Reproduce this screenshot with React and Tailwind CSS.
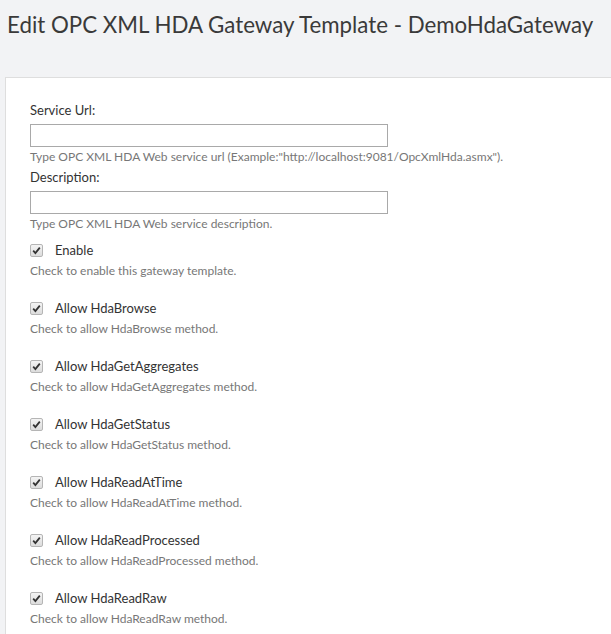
import React from 'react';

const font = { fontFamily: '"Segoe UI", Lato, "Open Sans", sans-serif' };

const toggles = [
  ['Enable', 'Check to enable this gateway template.'],
  ['Allow HdaBrowse', 'Check to allow HdaBrowse method.'],
  ['Allow HdaGetAggregates', 'Check to allow HdaGetAggregates method.'],
  ['Allow HdaGetStatus', 'Check to allow HdaGetStatus method.'],
  ['Allow HdaReadAtTime', 'Check to allow HdaReadAtTime method.'],
  ['Allow HdaReadProcessed', 'Check to allow HdaReadProcessed method.'],
  ['Allow HdaReadRaw', 'Check to allow HdaReadRaw method.'],
];

function Check() {
  return (
    <span className="w-[13px] h-[13px] shrink-0 rounded-[2px] border border-[#b5b5b5] bg-gradient-to-b from-[#f4f4f4] to-[#dcdcdc] flex items-center justify-center">
      <svg width="9" height="9" viewBox="0 0 9 9">
        <path d="M1.2 4.6 L3.4 7 L7.8 1.6" fill="none" stroke="#333" strokeWidth="1.8" />
      </svg>
    </span>
  );
}

export default function App() {
  return (
    <div className="min-h-[634px] bg-[#f2f3f5] text-[#333] overflow-hidden" style={font}>
      <h1 className="pt-[10px] pl-[7px] text-[22.3px] leading-[29px] font-normal text-[#3a3a3a] whitespace-nowrap">
        Edit OPC XML HDA Gateway Template - DemoHdaGateway
      </h1>
      <div className="mt-[38px] ml-[5px] bg-white border border-[#dedede] border-r-0 pt-[23px] pl-[24px] pb-8">
        <div className="text-[13px] leading-[18px]">Service Url:</div>
        <div className="mt-[5px] w-[358px] h-[23px] border border-[#a9a9a9] bg-white" />
        <div className="mt-[1px] text-[12px] leading-[17px] text-[#777]">
          Type OPC XML HDA Web service url (Example:"http://localhost:9081/OpcXmlHda.asmx").
        </div>
        <div className="mt-[3px] text-[13px] leading-[18px]">Description:</div>
        <div className="mt-[5px] w-[358px] h-[23px] border border-[#a9a9a9] bg-white" />
        <div className="mt-[1px] text-[12px] leading-[17px] text-[#777]">
          Type OPC XML HDA Web service description.
        </div>
        <div className="mt-[9px] flex flex-col gap-[20px]">
          {toggles.map(([label, help]) => (
            <div key={label}>
              <div className="flex items-center h-[18px] gap-[12px]">
                <Check />
                <span className="text-[13px] leading-[18px]">{label}</span>
              </div>
              <div className="mt-[3px] text-[12px] leading-[17px] text-[#777]">{help}</div>
            </div>
          ))}
        </div>
      </div>
    </div>
  );
}
